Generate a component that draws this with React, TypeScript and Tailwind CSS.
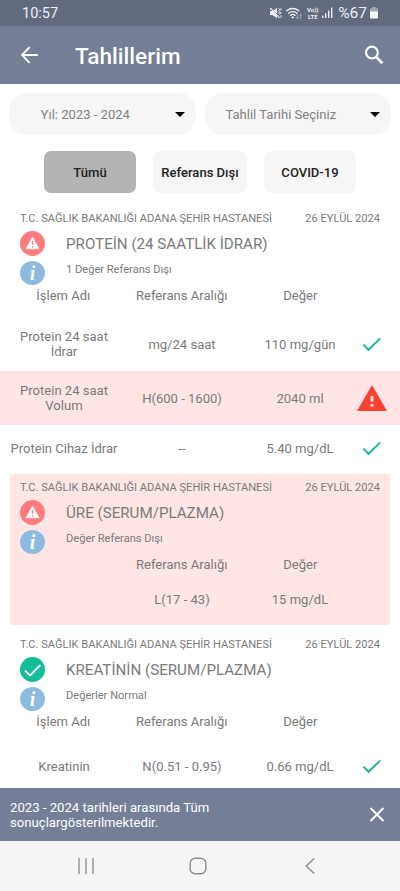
import clsx from 'clsx'

type Row = {
  name: string
  range: string
  value: string
  status?: 'ok' | 'alert'
}

type Result = {
  title: string
  note: string
  normal: boolean
  boxed?: boolean
  columns: string[]
  rows: Row[]
}

const results: Result[] = [
  {
    title: 'PROTEİN (24 SAATLİK İDRAR)',
    note: '1 Değer Referans Dışı',
    normal: false,
    columns: ['İşlem Adı', 'Referans Aralığı', 'Değer'],
    rows: [
      { name: 'Protein 24 saat İdrar', range: 'mg/24 saat', value: '110 mg/gün', status: 'ok' },
      { name: 'Protein 24 saat Volum', range: 'H(600 - 1600)', value: '2040 ml', status: 'alert' },
      { name: 'Protein Cihaz İdrar', range: '--', value: '5.40 mg/dL', status: 'ok' },
    ],
  },
  {
    title: 'ÜRE (SERUM/PLAZMA)',
    note: 'Değer Referans Dışı',
    normal: false,
    boxed: true,
    columns: ['', 'Referans Aralığı', 'Değer'],
    rows: [{ name: '', range: 'L(17 - 43)', value: '15 mg/dL' }],
  },
  {
    title: 'KREATİNİN (SERUM/PLAZMA)',
    note: 'Değerler Normal',
    normal: true,
    columns: ['İşlem Adı', 'Referans Aralığı', 'Değer'],
    rows: [{ name: 'Kreatinin', range: 'N(0.51 - 0.95)', value: '0.66 mg/dL', status: 'ok' }],
  },
]

function StatusBar() {
  return (
    <div className="h-[26px] bg-[#626a7f] flex items-center pl-[22px] pr-[22px] text-[#eef0f6]">
      <span className="pt-[2px] text-[14.5px] leading-none">10:57</span>
      <div className="ml-auto flex items-center">
        {/* muted */}
        <svg width="12" height="12" viewBox="0 0 12 12" className="mr-[4px]">
          <path d="M0 4h2.4L7 .8v10.4L2.4 8H0z" fill="currentColor" />
          <path d="M.8 .6l9 10" stroke="#626a7f" strokeWidth=".8" />
          <path d="M.4 1.2l9.2 9.6" stroke="currentColor" strokeWidth="1.2" />
          <path d="M8.4 1.3l1.4 1.2-1.4 1.2 1.4 1.2-1.4 1.2 1.4 1.2M11 1.3v2.2M10.6 5v2M11 8.4v2.2" stroke="currentColor" strokeWidth="1" fill="none" />
        </svg>
        {/* wifi */}
        <svg width="17" height="12" viewBox="0 0 17 12" className="mr-[3px]" fill="none" stroke="currentColor" strokeLinecap="round">
          <path d="M.8 3.8a9 9 0 0 1 12 0M2.6 6.2a6.2 6.2 0 0 1 8.4 0M4.5 8.4a3.4 3.4 0 0 1 4.6 0" strokeWidth="1.3" />
          <circle cx="6.8" cy="10.4" r=".7" fill="currentColor" />
          <path d="M11.4 7.5v4M10.4 10.5l1 1 1-1M14.6 11.5v-4M13.6 8.5l1-1 1 1" strokeWidth=".8" opacity=".5" />
        </svg>
        <div className="flex flex-col items-center mr-[3px] w-[13px] text-[6px] leading-[7px] font-bold">
          <span>Vo))</span>
          <span>LTE</span>
        </div>
        <svg width="11" height="12" viewBox="0 0 11 12" className="mr-[5px]" fill="currentColor">
          <rect x="0" y="8.5" width="1.4" height="2.5" />
          <rect x="3" y="6.3" width="1.4" height="4.7" />
          <rect x="6" y="3.5" width="1.4" height="7.5" />
          <rect x="9" y=".5" width="1.4" height="10.5" />
        </svg>
        <span className="pt-[2px] text-[15.5px] leading-none mr-[3px]">%67</span>
        <svg width="8" height="12" viewBox="0 0 8 12">
          <path d="M2.3 0h3.4v1.2H7a1 1 0 0 1 1 1V5H0V2.2a1 1 0 0 1 1-1h1.3z" fill="#a3a8b6" />
          <path d="M0 4.6h8v5.6A1.3 1.3 0 0 1 6.7 11.5H1.3A1.3 1.3 0 0 1 0 10.2z" fill="#fff" />
        </svg>
      </div>
    </div>
  )
}

function Header() {
  return (
    <header className="h-[58px] bg-[#747e97] flex items-center pl-[20px] pr-[16px] text-white">
      <svg width="19" height="18" viewBox="0 0 19 18" fill="none" stroke="currentColor" strokeWidth="1.9">
        <path d="M17.8 9H2.5M9.6 1.2L2 9l7.6 7.8" />
      </svg>
      <h1 className="ml-[36px] pt-[4px] text-[22.6px] font-medium leading-none">Tahlillerim</h1>
      <svg width="20" height="20" viewBox="0 0 20 20" className="ml-auto" fill="none" stroke="currentColor">
        <circle cx="7.9" cy="7.6" r="5.9" strokeWidth="2.2" />
        <path d="M12.2 12l6.2 6.2" strokeWidth="2.7" />
      </svg>
    </header>
  )
}

function Select({ label }: { label: string }) {
  return (
    <div className="flex-1 h-[42px] rounded-[18px] bg-[#f6f6f6] flex items-center pr-[11px]">
      <span className="flex-1 pr-[13px] text-center text-[#808080]">{label}</span>
      <svg width="10" height="5" viewBox="0 0 10 5">
        <path d="M0 0h10L5 5z" fill="#000" />
      </svg>
    </div>
  )
}

function StatusBadge({ normal }: { normal: boolean }) {
  if (normal) {
    return (
      <svg width="25" height="25" viewBox="0 0 25 25" className="shrink-0">
        <circle cx="12.5" cy="12.5" r="12.5" fill="#12bd9a" />
        <path d="M5 13.6l5 4.9L20.4 8" fill="none" stroke="#fff" strokeWidth="1.8" />
      </svg>
    )
  }
  return (
    <svg width="25" height="25" viewBox="0 0 25 25" className="shrink-0">
      <circle cx="12.5" cy="12.5" r="12.5" fill="#ff7b7e" />
      <path d="M12.5 6.3L19 17.8H6z" fill="#fff" stroke="#fff" strokeWidth=".8" strokeLinejoin="round" />
      <path d="M12.5 10v4M12.5 15.1v1.4" stroke="#ff7b7e" strokeWidth="1.3" />
    </svg>
  )
}

function InfoBadge() {
  return (
    <span className="w-[25px] h-[24px] shrink-0 rounded-[50%] bg-[#8dbbdf] flex items-center justify-center text-white font-bold italic text-[20px] leading-none font-['Liberation_Serif',serif]">
      i
    </span>
  )
}

function RowIcon({ status }: { status?: 'ok' | 'alert' }) {
  if (status === 'ok') {
    return (
      <svg width="20" height="16" viewBox="0 0 20 16">
        <path d="M1.4 8.6l5.1 5.2L18.3 2.4" fill="none" stroke="#22b597" strokeWidth="2" />
      </svg>
    )
  }
  if (status === 'alert') {
    return (
      <svg width="30" height="26" viewBox="0 0 30 26" className="shrink-0">
        <path d="M15 0l15 26H0z" fill="#fb4036" />
        <path d="M15 11v5.6M15 19v2.8" stroke="#fde5e4" strokeWidth="2.8" />
      </svg>
    )
  }
  return null
}

function ResultCard({ result }: { result: Result }) {
  return (
    <section className={clsx(result.boxed && 'bg-[#ffe6e5] mx-[10px] mt-[3px] mb-[6px] rounded-[2px] pb-[3px]')}>
      <div className={clsx(result.boxed && '-mx-[10px]')}>
        <div className="h-[26px] pt-[1px] px-[20px] flex items-center justify-between text-[11.1px]">
          <span>T.C. SAĞLIK BAKANLIĞI ADANA ŞEHİR HASTANESİ</span>
          <span>26 EYLÜL 2024</span>
        </div>
        <div className="flex pl-[20px] h-[53px]">
          <div className="flex flex-col gap-[5px] mr-[21px]">
            <StatusBadge normal={result.normal} />
            <InfoBadge />
          </div>
          <div>
            <h2 className="text-[15.15px] leading-[27px]">{result.title}</h2>
            <p className="text-[11.1px] leading-[24px]">{result.note}</p>
          </div>
        </div>
        <div className="flex h-[23px] pb-[1px] items-center pl-[4px]">
          {result.columns.map((c, i) => (
            <span key={i} className="w-[118.5px] text-center">{c}</span>
          ))}
        </div>
        <div className={result.boxed ? '' : 'pt-[10px]'}>
          {result.rows.map((r) => (
            <div
              key={r.value}
              className={clsx(
                'flex items-center pl-[5px]',
                r.name.startsWith('Protein 24') ? 'h-[54px]' : 'h-[46px]',
                r.status === 'alert' && 'bg-[#ffe6e5]',
              )}
            >
              <span className="w-[118px] px-[5px] text-center">{r.name}</span>
              <span className={clsx('w-[118px] text-center', r.range === '--' && 'tracking-[0.5px]')}>{r.range}</span>
              <span className="w-[118px] text-center">{r.value}</span>
              <span className="w-[26px] flex justify-center">
                <RowIcon status={r.status} />
              </span>
            </div>
          ))}
        </div>
      </div>
    </section>
  )
}

export default function App() {
  return (
    <div className="w-[400px] h-[891px] overflow-hidden flex flex-col bg-white text-[#7a7a7a] text-[13.05px] leading-[15px] font-['Roboto',sans-serif]">
      <StatusBar />
      <Header />

      <main className="flex-1 min-h-0 overflow-hidden">
        <div className="flex gap-[9px] px-[9px] pt-[9px]">
          <Select label="Yıl: 2023 - 2024" />
          <Select label="Tahlil Tarihi Seçiniz" />
        </div>
        <div className="flex justify-center gap-[17px] pt-[16px] pb-[12px] text-[#222] font-medium">
          <button className="w-[92px] h-[42px] rounded-[7px] bg-[#b4b4b4]">Tümü</button>
          <button className="w-[94px] h-[42px] rounded-[7px] bg-[#f6f6f6]">Referans Dışı</button>
          <button className="w-[92px] h-[42px] rounded-[7px] bg-[#f6f6f6]">COVID-19</button>
        </div>

        {results.map((r) => (
          <ResultCard key={r.title} result={r} />
        ))}
      </main>

      <div className="h-[53px] shrink-0 bg-[#747e97] flex items-center justify-between pl-[10px] pr-[15px] text-white text-[13.15px]">
        <p className="w-[220px]">2023 - 2024 tarihleri arasında Tüm sonuçlargösterilmektedir.</p>
        <svg width="16" height="16" viewBox="0 0 16 16" stroke="currentColor" strokeWidth="1.9">
          <path d="M1.5 1l13 13M14.5 1l-13 13" />
        </svg>
      </div>

      {/* Android nav */}
      <nav className="h-[50px] shrink-0 bg-[#f5f5f8] flex items-center pl-[78px]">
        <svg width="16" height="16" viewBox="0 0 16 16" stroke="#8b8b8e" strokeWidth="1.3">
          <path d="M1 0v16M8 0v16M15 0v16" />
        </svg>
        <svg width="18" height="18" viewBox="0 0 18 18" fill="none" stroke="#8b8b8e" strokeWidth="1.4" className="ml-[95px] mr-[98px]">
          <rect x="1.2" y="1.2" width="15.6" height="15.6" rx="5" />
        </svg>
        <svg width="10" height="16" viewBox="0 0 10 16" fill="none" stroke="#8b8b8e" strokeWidth="1.4">
          <path d="M9.2 .5L1.2 8l8 7.5" />
        </svg>
      </nav>
    </div>
  )
}
